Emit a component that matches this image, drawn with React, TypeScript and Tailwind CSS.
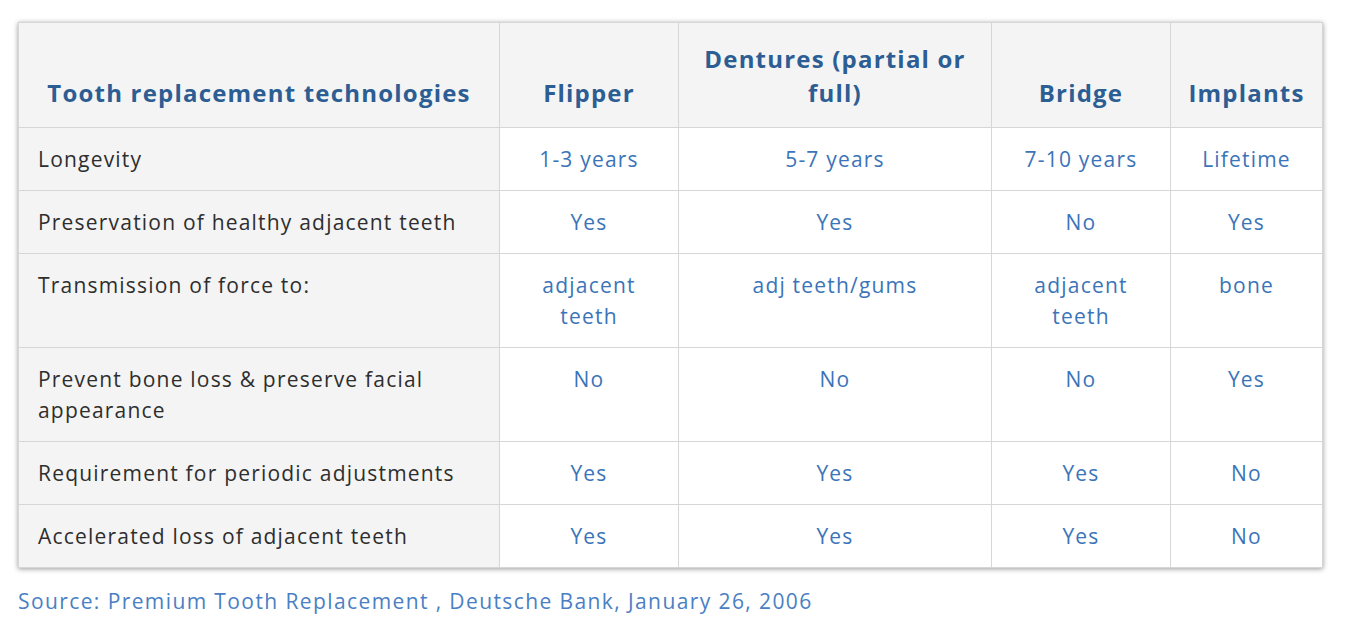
const rows: { label: string; values: string[]; tall?: boolean }[] = [
  { label: "Longevity", values: ["1-3 years", "5-7 years", "7-10 years", "Lifetime"] },
  { label: "Preservation of healthy adjacent teeth", values: ["Yes", "Yes", "No", "Yes"] },
  { label: "Transmission of force to:", values: ["adjacent teeth", "adj teeth/gums", "adjacent teeth", "bone"], tall: true },
  { label: "Prevent bone loss & preserve facial appearance", values: ["No", "No", "No", "Yes"], tall: true },
  { label: "Requirement for periodic adjustments", values: ["Yes", "Yes", "Yes", "No"] },
  { label: "Accelerated loss of adjacent teeth", values: ["Yes", "Yes", "Yes", "No"] },
];

const headers = ["Flipper", "Dentures  (partial or full)", "Bridge", "Implants"];
const widths = ["w-[179px]", "w-[313px]", "w-[179px]", "w-[152px]"];
const valueWidths = ["w-[130px]", "w-[280px]", "w-[130px]", "w-[130px]"];

export default function App() {
  return (
    <div className="min-h-screen bg-white pl-[18px] pt-[22px] font-['Open_Sans',sans-serif]">
      <table className="w-[1305px] table-fixed border-collapse shadow-[0_1px_5px_rgba(0,0,0,0.4)]">
        <colgroup>
          <col className="w-[481px]" />
          {widths.map((w, i) => (
            <col key={i} className={w} />
          ))}
        </colgroup>
        <thead>
          <tr className="h-[105px] bg-[#f4f4f4]">
            <th className="border border-[#d6d6d6] px-1 pb-[17px] align-bottom text-[24px] font-bold leading-[34px] tracking-[1.2px] text-[#2c5d93]">
              Tooth replacement technologies
            </th>
            {headers.map((h, i) => (
              <th
                key={h}
                className="border border-[#d6d6d6] px-1 pb-[17px] align-bottom text-[24px] font-bold leading-[34px] tracking-[1.2px] text-[#2c5d93]"
              >
                <div className={i === 1 ? "mx-auto w-[290px]" : ""}>{h}</div>
              </th>
            ))}
          </tr>
        </thead>
        <tbody>
          {rows.map((r) => (
            <tr key={r.label} className={r.tall ? "h-[94px]" : "h-[63px]"}>
              <td className="border border-[#d6d6d6] bg-[#f4f4f4] pl-[19px] pr-2 pt-[16px] align-top text-[21px] leading-[31px] tracking-[1.2px] text-[#2e2e2e]">
                <div className="w-[440px]">{r.label}</div>
              </td>
              {r.values.map((v, i) => (
                <td
                  key={i}
                  className="border border-[#d6d6d6] bg-white px-2 pt-[16px] text-center align-top text-[21px] leading-[31px] tracking-[1.2px] text-[#3b74b8]"
                >
                  <div className={`mx-auto ${valueWidths[i]}`}>{v}</div>
                </td>
              ))}
            </tr>
          ))}
        </tbody>
      </table>
      <p className="mt-[18px] text-[21px] leading-[30px] tracking-[1.4px] text-[#4a80c3]">
        Source: Premium Tooth Replacement , Deutsche Bank, January 26, 2006
      </p>
    </div>
  );
}
